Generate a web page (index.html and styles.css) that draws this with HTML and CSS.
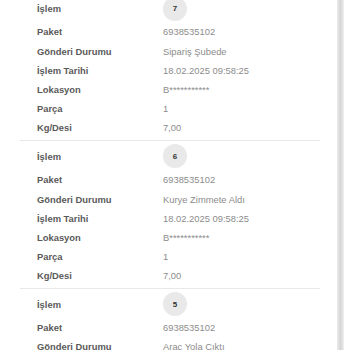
FILE: index.html
```html
<!DOCTYPE html>
<html>
  <head lang="tr">
    <meta charset="UTF-8" />
    <title>Gönderi Hareketleri</title>
    <link rel="stylesheet" href="styles.css">
  </head>

  <body>
    <div class="page">
      <div class="history">
        <div class="move">
          <div class="move-row move-head">
            <span class="move-label">İşlem</span>
            <span class="move-step">7</span>
          </div>
          <div class="move-row"><span class="move-label">Paket</span><span class="move-value">6938535102</span></div>
          <div class="move-row"><span class="move-label">Gönderi Durumu</span><span class="move-value">Sipariş Şubede</span></div>
          <div class="move-row"><span class="move-label">İşlem Tarihi</span><span class="move-value">18.02.2025 09:58:25</span></div>
          <div class="move-row"><span class="move-label">Lokasyon</span><span class="move-value">B***********</span></div>
          <div class="move-row"><span class="move-label">Parça</span><span class="move-value">1</span></div>
          <div class="move-row"><span class="move-label">Kg/Desi</span><span class="move-value">7,00</span></div>
        </div>
        <div class="move">
          <div class="move-row move-head">
            <span class="move-label">İşlem</span>
            <span class="move-step">6</span>
          </div>
          <div class="move-row"><span class="move-label">Paket</span><span class="move-value">6938535102</span></div>
          <div class="move-row"><span class="move-label">Gönderi Durumu</span><span class="move-value">Kurye Zimmete Aldı</span></div>
          <div class="move-row"><span class="move-label">İşlem Tarihi</span><span class="move-value">18.02.2025 09:58:25</span></div>
          <div class="move-row"><span class="move-label">Lokasyon</span><span class="move-value">B***********</span></div>
          <div class="move-row"><span class="move-label">Parça</span><span class="move-value">1</span></div>
          <div class="move-row"><span class="move-label">Kg/Desi</span><span class="move-value">7,00</span></div>
        </div>
        <div class="move">
          <div class="move-row move-head">
            <span class="move-label">İşlem</span>
            <span class="move-step">5</span>
          </div>
          <div class="move-row"><span class="move-label">Paket</span><span class="move-value">6938535102</span></div>
          <div class="move-row"><span class="move-label">Gönderi Durumu</span><span class="move-value">Araç Yola Çıktı</span></div>
          <div class="move-row"><span class="move-label">İşlem Tarihi</span><span class="move-value">18.02.2025 09:58:25</span></div>
        </div>
      </div>
      <div class="edge"></div>
    </div>
  </body>
</html>
```

FILE: styles.css
```css
body {
  margin: 0;
  background: #ffffff;
  font-family: "Liberation Sans", Arial, sans-serif;
  overflow: hidden;
}

.page {
  display: flex;
  height: 350px;
  overflow: hidden;
}

.history {
  width: 300px;
  margin: -7px 17px 0 20px;
}

.move {
  padding: 3.5px 0 2.4px 0;
  border-bottom: 1px solid #e8e8e8;
}

.move-row {
  display: flex;
  align-items: center;
  height: 19.2px;
  padding-left: 17px;
}

.move-head {
  height: 24px;
  margin-bottom: 1.9px;
}

.move-label {
  width: 126px;
  flex-shrink: 0;
  font-size: 9.4px;
  font-weight: bold;
  color: #5a5a5a;
}

.move-value {
  font-size: 9.4px;
  color: #8c8c8c;
}

.move-step {
  display: flex;
  align-items: center;
  justify-content: center;
  width: 24px;
  height: 24px;
  border-radius: 50%;
  background: #e9e9e9;
  font-size: 8px;
  font-weight: bold;
  color: #333333;
}

.edge {
  width: 7px;
  background: linear-gradient(to right, #ececec, #d6d6d6 45%, #dedede 70%, #f2f2f2);
}
```
